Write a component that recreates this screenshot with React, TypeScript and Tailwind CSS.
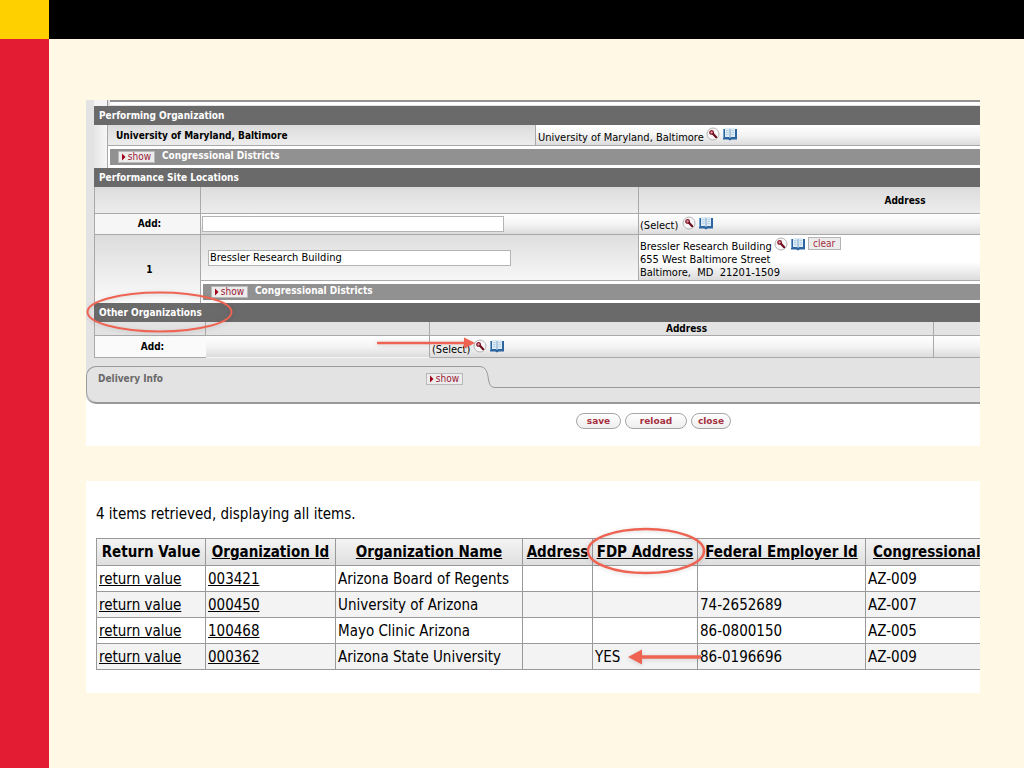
import type { ReactNode } from 'react'

const results = [
  { id: '003421', name: 'Arizona Board of Regents', fdp: '', ein: '', district: 'AZ-009' },
  { id: '000450', name: 'University of Arizona', fdp: '', ein: '74-2652689', district: 'AZ-007' },
  { id: '100468', name: 'Mayo Clinic Arizona', fdp: '', ein: '86-0800150', district: 'AZ-005' },
  { id: '000362', name: 'Arizona State University', fdp: 'YES', ein: '86-0196696', district: 'AZ-009' },
]

const headCell = 'h-[27px] border border-[#999] p-0 font-bold'
const cell = 'h-[26px] border border-[#999] px-0.5 py-0'
const line = 'border-[#a9a9a9]'
const shade = 'bg-linear-to-b from-[#dcdcdc] to-[#ededed]'
const shine = 'bg-linear-to-b from-white via-[#f4f4f4] to-[#dcdcdc]'

function LookupButtons() {
  return (
    <span className="flex gap-[3px]">
      <button type="button" aria-label="Search">
        <svg width="14" height="14" viewBox="0 0 14 14" fill="none">
          <circle cx="7" cy="7" r="6" fill="#f7f7f7" stroke="#b5b5b5" />
          <circle cx="5.6" cy="5.4" r="1.8" fill="#d9a3ad" stroke="#8a1c2e" strokeWidth="1.3" />
          <path d="M7.2 7l3 3.2" stroke="#6d0f1f" strokeWidth="2.2" strokeLinecap="round" />
        </svg>
      </button>
      <button type="button" aria-label="Direct inquiry">
        <svg width="14" height="14" viewBox="0 0 14 14">
          <path d="M0 2h14v10.500H8.800L7 13.500l-1.800-1H0z" fill="#2c659f" />
          <path d="M0 2h1v9H0z" fill="#6fa3cc" />
          <path d="M2 1h4l1 .8L8 1h4v9H8l-1 .8-1-.8H2z" fill="#dcebf5" />
          <path d="M7 1.800v9" stroke="#7fa6c6" />
          <path d="M3 3.500h2.500M3 5.500h2.500M3 7.500h2.500M8.500 3.500H11M8.500 5.500H11M8.500 7.500H11" stroke="#b7d0e2" />
        </svg>
      </button>
    </span>
  )
}

function ShowButton() {
  return (
    <button
      type="button"
      className="flex h-3 w-[37px] items-center justify-center gap-0.5 border border-[#b9b9b9] bg-[#ececec] text-[10px]/[10px] text-[#9c2036]"
    >
      <svg width="4" height="8" viewBox="0 0 4 8">
        <path d="M0 .5L3.500 4 0 7.500z" fill="#a3001b" />
      </svg>
      show
    </button>
  )
}

function SectionBar({ children }: { children: ReactNode }) {
  return (
    <h2 className="flex h-[19px] items-center bg-[#6a6a6a] pl-[5px] text-[10px] font-bold text-white">
      {children}
    </h2>
  )
}

function Districts() {
  return (
    <div className="border-y-[3px] border-l-2 border-white">
      <div className="flex h-4 items-start gap-[7px] bg-[#919191] pl-2 text-white">
        <span className="pt-0.5">
          <ShowButton />
        </span>
        <span className="text-[10px]/[14px] font-bold">Congressional Districts</span>
      </div>
    </div>
  )
}

function PillButton({ children, width }: { children: string; width: string }) {
  return (
    <button
      type="button"
      className={`${width} h-4 rounded-full border border-[#a5a5a5] bg-linear-to-b from-white to-[#eee] font-['DejaVu_Sans'] text-[9px]/[12px] font-bold text-[#a5303f]`}
    >
      {children}
    </button>
  )
}

function SiteLocations() {
  return (
    <table className="w-[1077px] table-fixed border-separate border-spacing-0">
      <colgroup>
        <col className="w-[107px]" />
        <col className="w-[438px]" />
        <col />
      </colgroup>
      <thead>
        <tr>
          <td className={`h-[27px] border-x border-b ${line} ${shade}`} />
          <td className={`border-r border-b ${line} ${shade}`} />
          <th className={`border-b p-0 text-[10px] ${line} ${shade}`}>Address</th>
        </tr>
      </thead>
      <tbody>
        <tr>
          <th className={`h-[21px] border-x border-b bg-[#f6f6f6] p-0 pl-1 text-[10px]/[12px] ${line}`}>
            <label htmlFor="site">Add:</label>
          </th>
          <td className={`border-r border-b p-0 pl-px ${line} ${shine}`}>
            <input id="site" className="block h-4 w-[302px] border border-[#b4b4b4] bg-white" />
          </td>
          <td className={`border-b p-0 pl-px ${line} ${shine}`}>
            <div className="flex h-5 gap-1">
              <span className="pt-[5px]">(Select)</span>
              <span className="pt-0.5">
                <LookupButtons />
              </span>
            </div>
          </td>
        </tr>
        <tr>
          <th
            rowSpan={2}
            className={`border-x bg-linear-to-b from-[#dcdcdc] to-[#fafafa] p-0 pl-1 text-[10px] ${line}`}
          >
            1
          </th>
          <td className={`h-[46px] border-r border-b p-0 pl-[7px] ${line} bg-linear-to-b from-[#dedede] to-[#f7f7f7]`}>
            <input
              aria-label="Site 1"
              defaultValue="Bressler Research Building"
              className="block h-4 w-[303px] border border-[#b4b4b4] bg-white px-px"
            />
          </td>
          <td className={`border-b bg-linear-to-b from-white from-60% to-[#dcdcdc] p-0 pl-px align-top ${line}`}>
            <div className="flex h-[18px] gap-0.5">
              <span className="pt-[5px]">Bressler Research Building</span>
              <span className="flex items-start gap-[3px] pt-0.5">
                <LookupButtons />
                <button
                  type="button"
                  className="h-[13px] w-[33px] border border-[#b4b4b4] bg-[#ececec] text-[10px]/[10px] text-[#a5303f]"
                >
                  clear
                </button>
              </span>
            </div>
            <p>655 West Baltimore Street</p>
            <p className="whitespace-pre">Baltimore,  MD  21201-1509</p>
          </td>
        </tr>
        <tr>
          <td colSpan={2} className="p-0">
            <Districts />
          </td>
        </tr>
      </tbody>
    </table>
  )
}

function OtherOrganizations() {
  return (
    <table className="w-full table-fixed border-separate border-spacing-0">
      <colgroup>
        <col className="w-[112px]" />
        <col className="w-[224px]" />
        <col className="w-[504px]" />
        <col />
      </colgroup>
      <thead>
        <tr>
          <td className={`h-3.5 border-x border-b ${line}`} />
          <td className={`border-r border-b ${line}`} />
          <th className={`border-r border-b p-0 pl-2.5 text-[10px]/[13px] ${line}`}>Address</th>
          <td className={`border-b ${line}`} />
        </tr>
      </thead>
      <tbody>
        <tr>
          <th className={`h-[22px] border-b border-l bg-[#fafafa] p-0 pl-1 text-[10px]/[12px] ${line}`}>Add:</th>
          <td className={`border-r border-b border-r-[#a9a9a9] border-b-[#f4f4f4] p-0 ${shine}`} />
          <td className={`border-r border-b p-0 pl-0.5 ${line} ${shine}`}>
            <div className="flex h-5 gap-[3px]">
              <span className="pt-[6px]">(Select)</span>
              <span className="pt-0.5">
                <LookupButtons />
              </span>
            </div>
          </td>
          <td className={`border-b ${line} ${shine}`} />
        </tr>
      </tbody>
    </table>
  )
}

function DeliveryInfo() {
  return (
    <section className="flex h-[38px] rounded-bl-[10px] border-b-2 border-[#999] bg-[#e3e3e3]">
      <div className="flex w-[393px] items-start justify-between rounded-l-[10px] border-t border-l border-[#999] pt-1.5 pr-4 pl-[11px]">
        <h2 className="text-[10px]/[12px] font-bold text-[#6a6a6a]">Delivery Info</h2>
        <ShowButton />
      </div>
      <svg width="16" height="22" viewBox="0 0 16 22" fill="none" className="shrink-0">
        <path d="M0 .5c6 0 8 4 9 10 1 7 2 11 7 11" stroke="#999" />
      </svg>
      <div className="mt-[21px] flex-1 border-t border-[#999]" />
    </section>
  )
}

function ProposalForm() {
  return (
    <section className="relative h-[346px] overflow-hidden bg-white text-[11px]/[13px]">
      <div className="bg-[#e3e3e3] pb-2">
        <div className="pl-2">
          <div className="flex h-1.5">
            <div className="w-[13px] bg-[#f4f4f4]" />
            <div className="flex-1 border-l border-[#999] pl-0.5">
              <div className="h-[5px] border-t-2 border-[#919191] bg-white" />
            </div>
          </div>
          <SectionBar>Performing Organization</SectionBar>
          <div className="flex">
            <div className="w-[13px] bg-linear-to-r from-[#e6e6e6] to-[#f6f6f6]" />
            <div className={`min-w-0 flex-1 border-l ${line}`}>
              <div className={`flex h-[21px] border-b ${line}`}>
                <div className={`w-[428px] border-r pt-1 pl-2 text-[10px]/[13px] font-bold ${line} ${shade}`}>
                  University of Maryland, Baltimore
                </div>
                <div className={`flex flex-1 gap-0.5 pl-0.5 ${shine}`}>
                  <span className="pt-1.5">University of Maryland, Baltimore</span>
                  <span className="pt-0.5">
                    <LookupButtons />
                  </span>
                </div>
              </div>
              <Districts />
            </div>
          </div>
          <SectionBar>Performance Site Locations</SectionBar>
          <SiteLocations />
          <SectionBar>Other Organizations</SectionBar>
          <OtherOrganizations />
        </div>
      </div>
      <div className="bg-linear-to-b from-[#e3e3e3] from-50% to-white to-50%">
        <DeliveryInfo />
      </div>
      <div className="flex gap-1 pt-[9px] pl-[490px]">
        <PillButton width="w-[45px]">save</PillButton>
        <PillButton width="w-[62px]">reload</PillButton>
        <PillButton width="w-10">close</PillButton>
      </div>

      {/* callouts */}
      <svg width="400" height="260" fill="none" className="pointer-events-none absolute top-0 left-0 drop-shadow-sm">
        <ellipse cx="73.500" cy="212" rx="72" ry="19.500" stroke="#ee6352" strokeWidth="2" />
        <path d="M291 243h88" stroke="#ee6352" strokeWidth="2.500" />
        <path d="M378 237.500l11 5.500-11 5.500z" fill="#ee6352" />
      </svg>
    </section>
  )
}

function LookupResults() {
  return (
    <section className="relative mt-[35px] h-[212px] overflow-hidden bg-white pt-6 pl-2.5 text-[15px]/[18px]">
      <p>4 items retrieved, displaying all items.</p>
      <table className="mt-[15px] w-[960px] table-fixed border-collapse whitespace-nowrap">
        <colgroup>
          <col className="w-[109px]" />
          <col className="w-[130px]" />
          <col className="w-[187px]" />
          <col className="w-[70px]" />
          <col className="w-[105px]" />
          <col className="w-[168px]" />
          <col />
        </colgroup>
        <thead className="bg-linear-to-b from-[#f4f4f4] to-[#dedede]">
          <tr>
            <th className={headCell}>Return Value</th>
            <th className={headCell}>
              <a href="#id" className="underline">Organization Id</a>
            </th>
            <th className={headCell}>
              <a href="#name" className="underline">Organization Name</a>
            </th>
            <th className={headCell}>
              <a href="#address" className="underline">Address</a>
            </th>
            <th className={headCell}>
              <a href="#fdp" className="underline">FDP Address</a>
            </th>
            <th className={headCell}>
              <a href="#ein" className="underline">Federal Employer Id</a>
            </th>
            <th className={`${headCell} pl-[7px] text-left`}>
              <a href="#district" className="underline">Congressional</a>
            </th>
          </tr>
        </thead>
        <tbody>
          {results.map((r) => (
            <tr key={r.id} className="even:bg-[#f3f3f3]">
              <td className={cell}>
                <a href="#return" className="underline">return value</a>
              </td>
              <td className={cell}>
                <a href="#org" className="underline">{r.id}</a>
              </td>
              <td className={cell}>{r.name}</td>
              <td className={cell} />
              <td className={cell}>{r.fdp}</td>
              <td className={cell}>{r.ein}</td>
              <td className={cell}>{r.district}</td>
            </tr>
          ))}
        </tbody>
      </table>

      <svg width="640" height="200" fill="none" className="pointer-events-none absolute top-0 left-0 drop-shadow-sm">
        <ellipse cx="560" cy="70" rx="58" ry="22" stroke="#ee6352" strokeWidth="2.500" />
        <path d="M553 176h62" stroke="#ee6352" strokeWidth="3.500" />
        <path d="M556 168.500l-14 7.500 14 7.500z" fill="#ee6352" />
      </svg>
    </section>
  )
}

export default function App() {
  return (
    <div className="flex min-h-screen bg-[#fef8e4] font-['DejaVu_Sans_Condensed','DejaVu_Sans',sans-serif] text-black">
      <aside className="flex w-[49px] shrink-0 flex-col bg-[#e31b33]">
        <div className="h-[39px] bg-[#ffd000]" />
      </aside>
      <div className="min-w-0 flex-1">
        <header className="h-[39px] bg-black" />
        <main className="mt-[61px] mr-11 ml-[37px]">
          <ProposalForm />
          <LookupResults />
        </main>
      </div>
    </div>
  )
}
